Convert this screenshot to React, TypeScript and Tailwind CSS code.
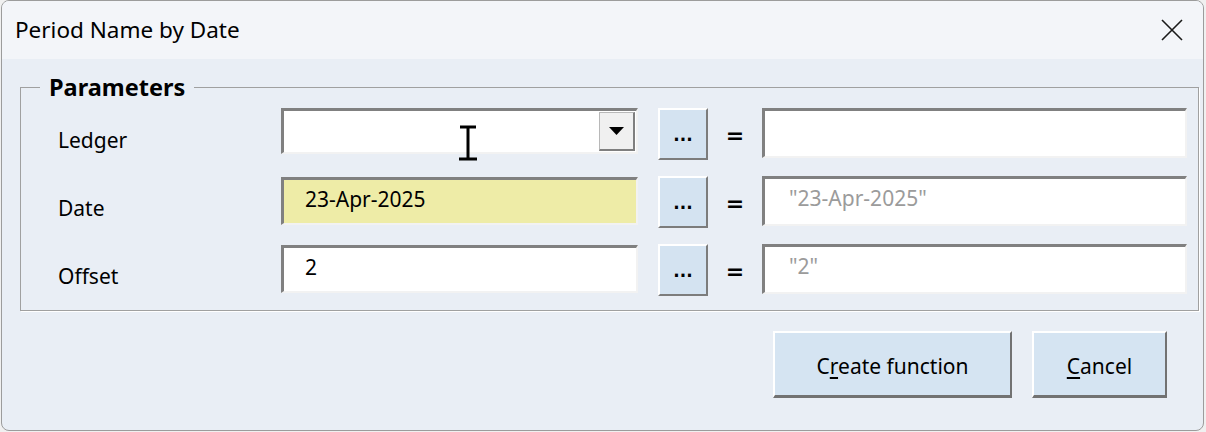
import React from "react";

function Ellipsis() {
  return (
    <button className="w-[50px] h-[52px] shrink-0 bg-[#d4e3f1] border-2 border-t-white border-l-white border-r-[#7c7c7c] border-b-[#7c7c7c] flex justify-center pt-[17px]">
      <span className="font-['DejaVu_Sans',sans-serif] font-bold text-[17px] leading-[16px]">...</span>
    </button>
  );
}

function Equals() {
  return (
    <div className="w-[54px] shrink-0 text-center pt-[15px] font-['DejaVu_Sans',sans-serif] font-bold text-[22px] leading-[26px]">=</div>
  );
}

function Result({ value }: { value?: string }) {
  return (
    <div className="w-[425px] h-[50px] shrink-0 bg-white border-t-[3px] border-l-[3px] border-t-[#808080] border-l-[#808080] border-r-2 border-b-2 border-r-[#f2f2f2] border-b-[#f2f2f2] pl-[24px] pt-[5px] text-[21px] leading-[28px] text-[#9b9b9b]">
      {value}
    </div>
  );
}

function Label({ children }: { children: React.ReactNode }) {
  return <div className="w-[223px] shrink-0 pt-[18px] text-[21px] leading-[28px]">{children}</div>;
}

export default function App() {
  return (
    <div className="w-[1206px] h-[432px] bg-[#f0f0f0] font-['Noto_Sans',sans-serif] text-black">
      <div className="ml-[1px] w-[1203px] h-[431px] border border-[#9c9c9c] rounded-[8px] overflow-hidden flex flex-col bg-[#e9eef5]">
        {/* Title bar */}
        <div className="h-[58px] shrink-0 bg-[#f3f5f9] flex items-center justify-between pl-[13px] pr-[20px]">
          <span className="text-[22.5px] leading-[28px]">Period Name by Date</span>
          <svg width="22" height="22" viewBox="0 0 22 22">
            <path d="M1 1 L21 21 M21 1 L1 21" stroke="#1a1a1a" strokeWidth="1.6" fill="none" />
          </svg>
        </div>

        <div className="pl-[18px] pt-[16px]">
          <fieldset className="w-[1179px] border border-[#a0a0a0] shadow-[1px_1px_0_#fff] pt-[9px] pb-[14px]">
            <legend className="ml-[19px] px-[9px] text-[23.5px] font-bold leading-[24px]">Parameters</legend>
            <div className="flex flex-col gap-[16px] pl-[37px]">
              {/* Ledger */}
              <div className="flex items-start">
                <Label>Ledger</Label>
                <div className="relative w-[357px] h-[46px] shrink-0 bg-white border-t-[3px] border-l-[3px] border-t-[#808080] border-l-[#808080] border-r-2 border-b-2 border-r-[#f2f2f2] border-b-[#f2f2f2] flex justify-end p-[1px]">
                  <div className="w-[36px] h-full bg-[#f0f0f0] border border-[#b8b8b8] border-r-2 border-b-2 border-r-[#7f7f7f] border-b-[#7f7f7f] flex items-center justify-center">
                    <svg width="15" height="8" viewBox="0 0 15 8">
                      <polygon points="0,0 15,0 7.5,8" fill="#000" />
                    </svg>
                  </div>
                  <svg className="absolute left-[174px] top-[14px]" width="20" height="36" viewBox="0 0 20 36">
                    <path d="M2 2 H18 M10 2 V34 M1 34 H19" stroke="#000" strokeWidth="3" fill="none" />
                  </svg>
                </div>
                <div className="w-[20px] shrink-0" />
                <Ellipsis />
                <Equals />
                <Result />
              </div>

              {/* Date */}
              <div className="flex items-start">
                <Label>Date</Label>
                <div className="w-[357px] h-[48px] mt-[1px] shrink-0 bg-[#eeeca7] border-t-[3px] border-l-[3px] border-t-[#808080] border-l-[#808080] border-r-2 border-b-2 border-r-[#f2f2f2] border-b-[#f2f2f2] pl-[21px] pt-[5px] text-[21px] leading-[28px]">
                  23-Apr-2025
                </div>
                <div className="w-[20px] shrink-0" />
                <Ellipsis />
                <Equals />
                <Result value={'"23-Apr-2025"'} />
              </div>

              {/* Offset */}
              <div className="flex items-start">
                <Label>Offset</Label>
                <div className="w-[357px] h-[48px] mt-[1px] shrink-0 bg-white border-t-[3px] border-l-[3px] border-t-[#808080] border-l-[#808080] border-r-2 border-b-2 border-r-[#f2f2f2] border-b-[#f2f2f2] pl-[21px] pt-[5px] text-[21px] leading-[28px]">
                  2
                </div>
                <div className="w-[20px] shrink-0" />
                <Ellipsis />
                <Equals />
                <Result value={'"2"'} />
              </div>
            </div>
          </fieldset>

          <div className="flex justify-end gap-[20px] mt-[20px] pr-[36px]">
            <button className="w-[239px] h-[67px] pt-[4px] bg-[#d5e4f2] border-2 border-t-white border-l-white border-r-[#727272] border-b-[#727272] border-b-[3px] text-[21px] leading-[28px]">
              C<span className="underline underline-offset-[3px]">r</span>eate function
            </button>
            <button className="w-[135px] h-[67px] pt-[4px] bg-[#d5e4f2] border-2 border-t-white border-l-white border-r-[#727272] border-b-[#727272] border-b-[3px] text-[21px] leading-[28px]">
              <span className="underline underline-offset-[3px]">C</span>ancel
            </button>
          </div>
        </div>
      </div>
    </div>
  );
}
